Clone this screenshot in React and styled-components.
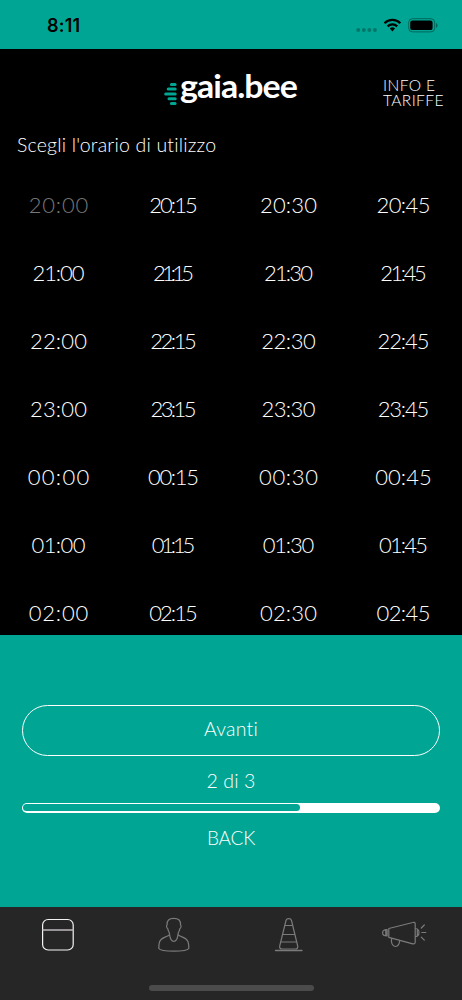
import React from 'react';
import styled, { createGlobalStyle } from 'styled-components';

const teal = '#00a693';

const GlobalStyle = createGlobalStyle`
  * { box-sizing: border-box; }
  body { margin: 0; background: #000; }
`;

const Screen = styled.div`
  width: 462px;
  height: 1000px;
  display: flex;
  flex-direction: column;
  overflow: hidden;
  background: #000;
  color: #fff;
  font-family: Lato, 'Liberation Sans', sans-serif;
  font-weight: 300;
`;

const StatusBar = styled.div`
  height: 49px;
  flex: none;
  display: flex;
  justify-content: space-between;
  padding: 15px 24px 0 47px;
  background: ${teal};
  color: #000;
`;

const Clock = styled.span`
  font: 600 18px/22px Inter, sans-serif;
  letter-spacing: 0.2px;
`;

const StatusIcons = styled.svg`
  width: 84px;
  height: 22px;
  display: block;
`;

const Header = styled.header`
  height: 71px;
  flex: none;
  display: flex;
  justify-content: space-between;
  padding: 18px 0 0 164px;
`;

const Logo = styled.div`
  display: flex;
  height: 44px;
`;

const LogoMark = styled.svg`
  width: 14px;
  height: 26px;
  margin-top: 14px;
`;

const LogoName = styled.span`
  margin-left: 2px;
  font-size: 32px;
  line-height: 37px;
  font-weight: 700;
  letter-spacing: -0.9px;
  transform: scaleX(1.06);
  transform-origin: left;
`;

const InfoLink = styled.a`
  width: 79px;
  padding-top: 11px;
  font-size: 15.6px;
  line-height: 15px;
`;

const InfoLine = styled.span`
  display: block;
  white-space: nowrap;
  letter-spacing: ${(p) => p.$spacing}px;
`;

const Title = styled.h1`
  height: 51px;
  flex: none;
  margin: 0;
  padding-left: 17px;
  font-size: 19.5px;
  line-height: 49px;
  font-weight: 300;
  letter-spacing: 0.18px;
`;

const TimeGrid = styled.div`
  flex: 1;
  min-height: 0;
  overflow: hidden;
  display: grid;
  grid-template-columns: repeat(4, 115px);
  grid-auto-rows: 68px;
  padding-left: 1px;
`;

const TimeSlot = styled.button`
  display: flex;
  justify-content: center;
  border: 0;
  padding: 0;
  background: none;
  color: ${(p) => (p.disabled ? '#777' : '#fff')};
  font: 300 22px/68px Lato, 'Liberation Sans', sans-serif;
`;

const TimeText = styled.span`
  letter-spacing: ${(p) => p.$spacing}px;
  margin-right: ${(p) => -p.$spacing}px;
`;

const Panel = styled.section`
  height: 272px;
  flex: none;
  display: flex;
  flex-direction: column;
  align-items: center;
  padding: 70px 22px 0;
  background: ${teal};
`;

const NextButton = styled.button`
  width: 418px;
  height: 50.5px;
  padding: 0 0 2px;
  border: 1.4px solid #fff;
  border-radius: 26px;
  background: none;
  color: #fff;
  font: 300 19.5px/46px Lato, 'Liberation Sans', sans-serif;
  letter-spacing: 0.2px;
`;

const StepLabel = styled.div`
  height: 47.5px;
  font-size: 19.5px;
  line-height: 49px;
  letter-spacing: 0.1px;
`;

const Progress = styled.div`
  width: 418px;
  height: 9.5px;
  padding: 1.4px;
  border-radius: 5px;
  background: #fff;
`;

const ProgressFill = styled.div`
  height: 100%;
  border-radius: 4px;
  background: ${teal};
`;

const BackButton = styled.button`
  margin-top: 11px;
  padding: 0;
  border: 0;
  background: none;
  color: #fff;
  font: 300 19px/28px Lato, 'Liberation Sans', sans-serif;
  letter-spacing: -0.2px;
`;

const TabBar = styled.nav`
  height: 93px;
  flex: none;
  display: flex;
  flex-direction: column;
  align-items: center;
  justify-content: space-between;
  padding-bottom: 9px;
  background: #262626;
`;

const Tabs = styled.div`
  display: grid;
  grid-template-columns: repeat(4, 115.5px);
`;

const TabIcon = styled.svg`
  width: 115.5px;
  height: 54px;
  fill: none;
  stroke: ${(p) => (p.$active ? '#f4f4f4' : '#7b7b7b')};
  stroke-width: 1.2;
  stroke-linecap: round;
  stroke-linejoin: round;
`;

const HomeIndicator = styled.div`
  width: 165px;
  height: 6px;
  border-radius: 3px;
  background: #4b4b4b;
`;

const hours = ['20', '21', '22', '23', '00', '01', '02'];
const minutes = ['00', '15', '30', '45'];
const advance = { 0: 15.1, 1: 7.5, 2: 12.8, 3: 12.5, 4: 13, 5: 12, ':': 5 };

// Narrow digits take less room than round ones, so each label gets its own tracking.
const tracking = (label) => {
  const width = [...label].reduce((sum, c) => sum + advance[c], 0) - 4;
  return (width - 56) / 4;
};

export default function App() {
  return (
    <>
      <GlobalStyle />
      <Screen>
        <StatusBar>
          <Clock>8:11</Clock>
          <StatusIcons viewBox="354 15 84 22">
            <g fill="#000" fillOpacity=".28">
              <circle cx="358.2" cy="30" r="2" />
              <circle cx="363.8" cy="30" r="2" />
              <circle cx="369.3" cy="30" r="2" />
              <circle cx="374.9" cy="30" r="2" />
            </g>
            <g fill="none" stroke="#000" strokeWidth="2.3">
              <path d="M384.5 23.2a11.2 11.2 0 0 1 15.8 0" />
              <path d="M387.6 26.4a6.8 6.8 0 0 1 9.6 0" />
            </g>
            <path d="M389.8 28.6a3.7 3.7 0 0 1 5.2 0l-2.6 2.9z" />
            <rect x="408.7" y="18.7" width="26" height="13.2" rx="3.8" fill="none" stroke="#000" strokeOpacity=".38" />
            <rect x="410.2" y="20.6" width="22.4" height="9.5" rx="2.2" />
            <path d="M436 22.9v4.8c2-.8 2-4 0-4.8z" fillOpacity=".4" />
          </StatusIcons>
        </StatusBar>
        <Header>
          <Logo>
            <LogoMark viewBox="164 81 14 26">
              <g stroke={teal} strokeWidth="3" strokeLinecap="round">
                <path d="M171.4 84.4h3.7M168.2 89.1h7M165.7 93.9h9.5M169 98.7h6.2M171.4 103.4h3.7" />
              </g>
            </LogoMark>
            <LogoName>gaia.bee</LogoName>
          </Logo>
          <InfoLink>
            <InfoLine $spacing={0.4}>INFO E</InfoLine>
            <InfoLine $spacing={0.35}>TARIFFE</InfoLine>
          </InfoLink>
        </Header>
        <Title>Scegli l'orario di utilizzo</Title>
        <TimeGrid>
          {hours.flatMap((h) =>
            minutes.map((m) => {
              const label = `${h}:${m}`;
              return (
                <TimeSlot key={label} disabled={label === '20:00'}>
                  <TimeText $spacing={tracking(label)}>{label}</TimeText>
                </TimeSlot>
              );
            })
          )}
        </TimeGrid>
        <Panel>
          <NextButton>Avanti</NextButton>
          <StepLabel>2 di 3</StepLabel>
          <Progress>
            <ProgressFill style={{ width: `${(2 / 3) * 100}%` }} />
          </Progress>
          <BackButton>BACK</BackButton>
        </Panel>
        <TabBar>
          <Tabs>
            <TabIcon $active viewBox="0 907 115.5 54">
              <rect x="42.6" y="919.5" width="30.6" height="30.5" rx="5.5" />
              <path d="M43 930h30" stroke="#bdb8bd" strokeWidth="1.6" />
            </TabIcon>
            <TabIcon viewBox="115.5 907 115.5 54">
              <path d="M169 935c-5 3-8.5 2.5-10 7-.5 1.8-.8 4-.7 6.500 2 3.500 28 3.500 30 0 .1-2.500-.2-4.700-.7-6.500-1.500-4.500-5-4-10-7" />
              <path d="M168.700 932.500c-.8-1-1.200-2.800-1.500-4-1.200-.3-1.500-3-.6-3.800-.3-4 1.800-6.300 6.700-6.300s7 2.300 6.700 6.300c.9.800.6 3.500-.6 3.800-.3 1.200-.7 3-1.500 4-.8 2.700-.2 8.700-4.600 9-4.400-.3-3.800-6.300-4.600-9z" />
            </TabIcon>
            <TabIcon viewBox="231 907 115.5 54">
              <path d="M275.5 950.5h26.5" strokeWidth="1.4" />
              <path d="M286 920.500c.6-2.400 4.900-2.400 5.500 0l6.200 25.500c.4 2-.6 3-2.500 3h-13c-1.900 0-2.900-1-2.500-3zM285 925.500h7.600M282.700 934.500h12.100M280.700 942h16.200" />
            </TabIcon>
            <TabIcon viewBox="347.2 907 115.5 54">
              <path d="M389 928.500l24-6c1.800-.5 2.400.1 2.400 1.500v18c0 1.500-.8 2.200-2.400 1.800l-24-6.500zM387.300 929.500c-6 0-6 6.500 0 6.500zM386 929.700v6.200" />
              <path d="M391.900 938.500c-1 3.500.4 7.500 3.500 8 3 .3 4.300-3.200 4.500-6" />
              <path d="M415.800 928.500c4.500.5 4.500 7.700 0 8.200M417.500 930v5.500M421.500 928l3-3M422 932.500h4M421.500 937.200l3 3" />
            </TabIcon>
          </Tabs>
          <HomeIndicator />
        </TabBar>
      </Screen>
    </>
  );
}
